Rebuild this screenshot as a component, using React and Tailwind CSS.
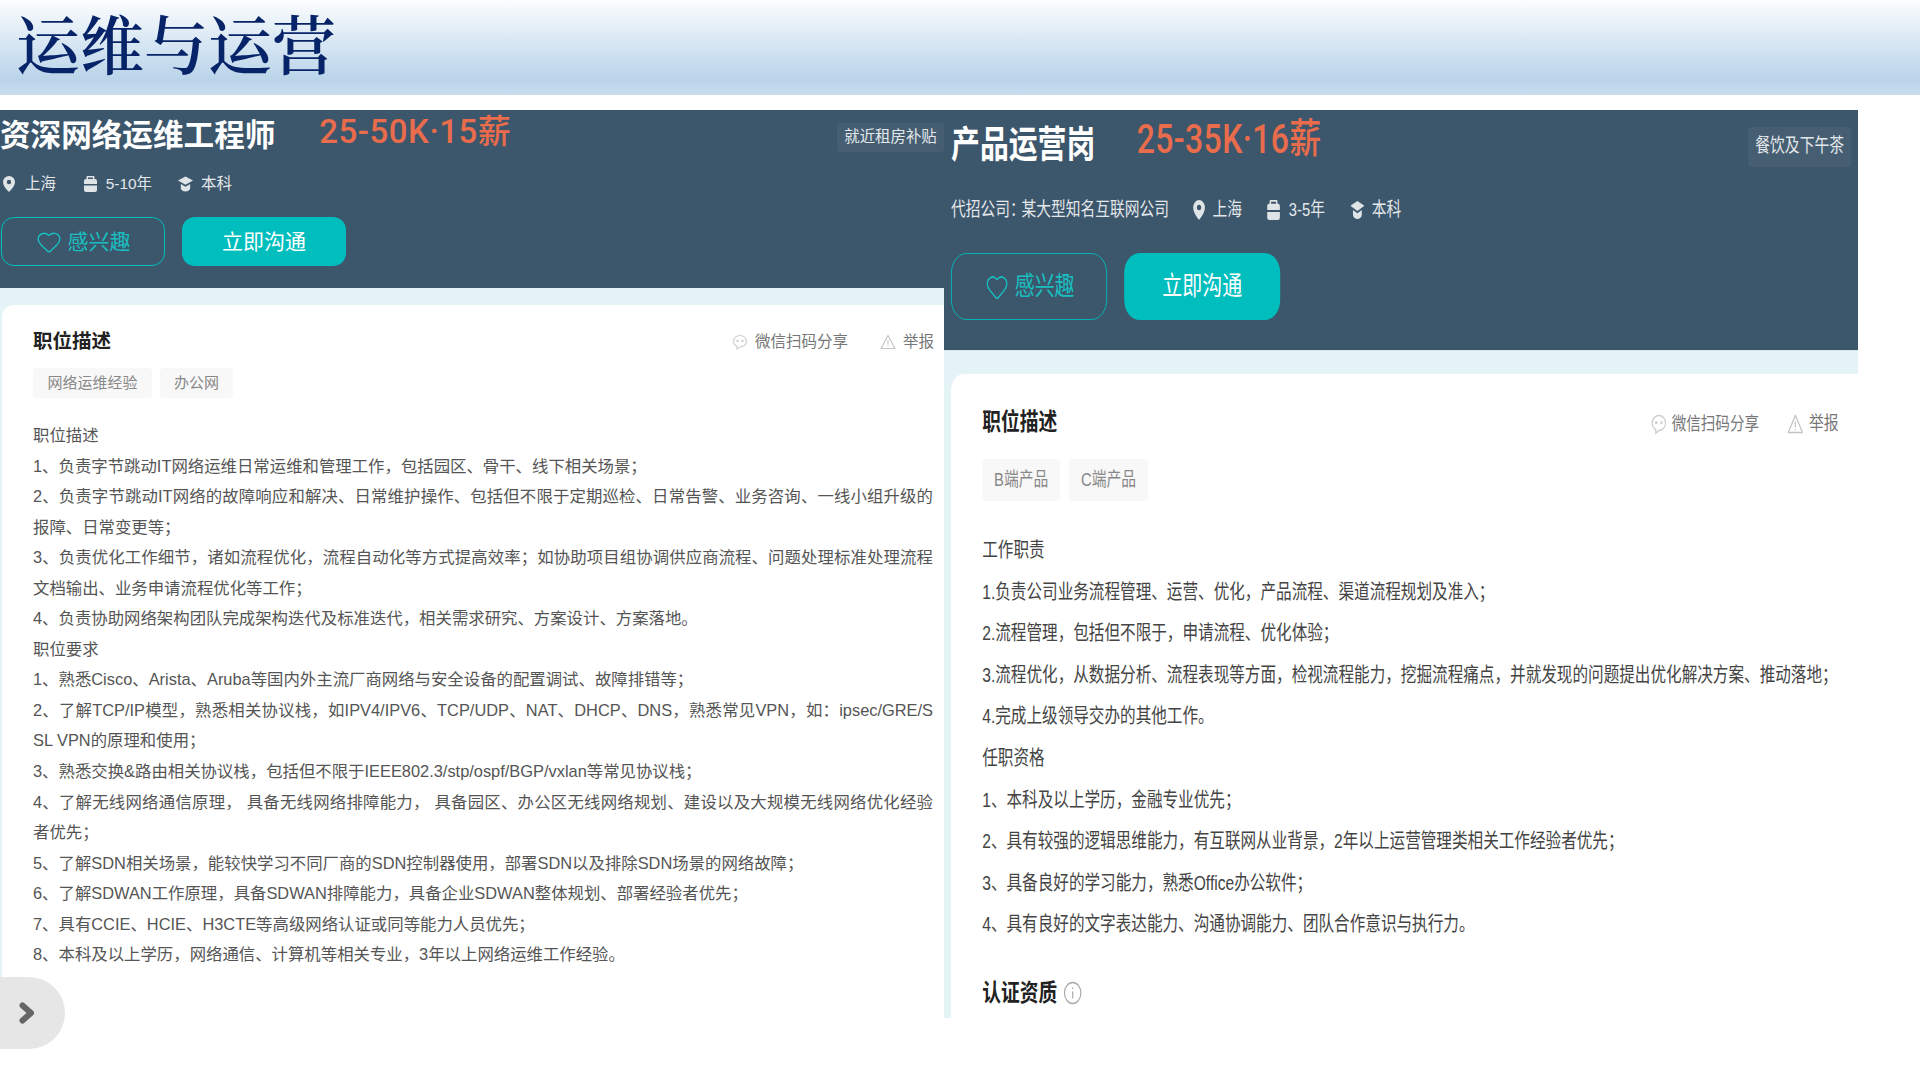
import React from 'react';
import { Heart } from 'lucide-react';

const leftLines = [
	'职位描述',
	'1、负责字节跳动IT网络运维日常运维和管理工作，包括园区、骨干、线下相关场景；',
	'2、负责字节跳动IT网络的故障响应和解决、日常维护操作、包括但不限于定期巡检、日常告警、业务咨询、一线小组升级的报障、日常变更等；',
	'3、负责优化工作细节，诸如流程优化，流程自动化等方式提高效率；如协助项目组协调供应商流程、问题处理标准处理流程文档输出、业务申请流程优化等工作；',
	'4、负责协助网络架构团队完成架构迭代及标准迭代，相关需求研究、方案设计、方案落地。',
	'职位要求',
	'1、熟悉Cisco、Arista、Aruba等国内外主流厂商网络与安全设备的配置调试、故障排错等；',
	'2、了解TCP/IP模型，熟悉相关协议栈，如IPV4/IPV6、TCP/UDP、NAT、DHCP、DNS，熟悉常见VPN，如：ipsec/GRE/SSL VPN的原理和使用；',
	'3、熟悉交换&路由相关协议栈，包括但不限于IEEE802.3/stp/ospf/BGP/vxlan等常见协议栈；',
	'4、了解无线网络通信原理， 具备无线网络排障能力， 具备园区、办公区无线网络规划、建设以及大规模无线网络优化经验者优先；',
	'5、了解SDN相关场景，能较快学习不同厂商的SDN控制器使用，部署SDN以及排除SDN场景的网络故障；',
	'6、了解SDWAN工作原理，具备SDWAN排障能力，具备企业SDWAN整体规划、部署经验者优先；',
	'7、具有CCIE、HCIE、H3CTE等高级网络认证或同等能力人员优先；',
	'8、本科及以上学历，网络通信、计算机等相关专业，3年以上网络运维工作经验。',
];

const rightLines = [
	'工作职责',
	'1.负责公司业务流程管理、运营、优化，产品流程、渠道流程规划及准入；',
	'2.流程管理，包括但不限于，申请流程、优化体验；',
	'3.流程优化，从数据分析、流程表现等方面，检视流程能力，挖掘流程痛点，并就发现的问题提出优化解决方案、推动落地；',
	'4.完成上级领导交办的其他工作。',
	'任职资格',
	'1、本科及以上学历，金融专业优先；',
	'2、具有较强的逻辑思维能力，有互联网从业背景，2年以上运营管理类相关工作经验者优先；',
	'3、具备良好的学习能力，熟悉Office办公软件；',
	'4、具有良好的文字表达能力、沟通协调能力、团队合作意识与执行力。',
];

function PinIcon({ className }) {
	return (
		<svg viewBox="0 0 12 16" className={className} fill="currentColor">
			<path fillRule="evenodd" d="M6 0a6 6 0 0 1 6 6c0 3.600-3.600 7.800-6 10C3.600 13.800 0 9.600 0 6a6 6 0 0 1 6-6zm0 3.800a2.200 2.200 0 1 0 0 4.400 2.200 2.200 0 0 0 0-4.400z" />
		</svg>
	);
}

function BagIcon({ className }) {
	return (
		<svg viewBox="0 0 13 16" className={className} fill="currentColor">
			<path d="M3.500 0h6a1 1 0 0 1 1 1v2h.6A1.900 1.900 0 0 1 13 4.900V8H0V4.900A1.900 1.900 0 0 1 1.900 3h.6V1a1 1 0 0 1 1-1zm.5 1.400V3h5V1.400z" fillRule="evenodd" />
			<path d="M0 9.500h13V14a2 2 0 0 1-2 2H2a2 2 0 0 1-2-2z" />
		</svg>
	);
}

function CapIcon({ className }) {
	return (
		<svg viewBox="0 0 16 16" className={className} fill="currentColor">
			<path d="M8 0l8 4.300-8 4.500L0 4.300z" />
			<path d="M3 8l5 2.800L13 8v4.500c0 2-2.400 3.500-5 3.500s-5-1.500-5-3.500z" />
		</svg>
	);
}

function ChatIcon({ className }) {
	return (
		<svg viewBox="0 0 16 16" className={className} fill="none" stroke="currentColor" strokeWidth="1.200">
			<path d="M8 1.500c3.600 0 6.500 2.500 6.500 5.800S11.600 13 8 13l-3 2v-2.600C2.800 11.400 1.500 9.500 1.500 7.300 1.500 4 4.400 1.500 8 1.500z" />
			<circle cx="5.500" cy="7" r=".6" fill="currentColor" />
			<circle cx="10.500" cy="7" r=".6" fill="currentColor" />
		</svg>
	);
}

function WarnIcon({ className }) {
	return (
		<svg viewBox="0 0 16 16" className={className} fill="none" stroke="currentColor" strokeWidth="1.200">
			<path d="M8 1.500L15 14.500H1z" strokeLinejoin="round" />
			<path d="M8 6v4.500M8 11.800v1" />
		</svg>
	);
}

function Meta({ children, textClass }) {
	return <span className={textClass}>{children}</span>;
}

function LeftPanel() {
	return (
		<section className="w-[944px] shrink-0">
			<div className="h-[178px] bg-[#3c566b] pt-[11px]">
				<div className="flex h-[29px] items-center">
					<h2 className="text-[30.600px] leading-none font-bold text-white">资深网络运维工程师</h2>
					<span className="ml-[44px] -mt-[8px] font-['Roboto','Noto_Sans_CJK_SC',sans-serif] text-[33px] leading-none font-medium tracking-[0.500px] text-[#e96c4c]">25-50K·15薪</span>
					<span className="mt-[3px] ml-auto flex h-[29px] w-[107px] items-center justify-center rounded-[4px] bg-white/5 text-[15.400px] text-[#e4e8eb]">就近租房补贴</span>
				</div>
				<div className="mt-[24px] flex h-[20px] items-center pl-[3px] text-[15.400px] text-[#e4e8eb]">
					<PinIcon className="h-[16px] w-[12px] text-[#dfe4e7]" />
					<Meta textClass="ml-[10px]">上海</Meta>
					<BagIcon className="ml-[27px] h-[16px] w-[15px] text-[#dfe4e7]" />
					<Meta textClass="ml-[8px]">5-10年</Meta>
					<CapIcon className="ml-[26px] h-[16px] w-[15px] text-[#dfe4e7]" />
					<Meta textClass="ml-[8px]">本科</Meta>
				</div>
				<div className="mt-[23px] flex gap-[17px] pl-px">
					<button className="flex h-[49px] w-[164px] items-center justify-center gap-[6px] rounded-[13px] border border-[#00bebd] text-[21px] text-[#19bfc0]">
						<Heart className="h-[26px] w-[26px]" strokeWidth={1.300} />
						感兴趣
					</button>
					<button className="h-[49px] w-[164px] rounded-[13px] bg-[#00bebd] text-[21px] text-white">立即沟通</button>
				</div>
			</div>
			<div className="bg-[#e3f3f6] pt-[17px] pl-[2px]">
				<div className="h-[672px] rounded-tl-[12px] bg-white pt-[26px] pl-[31px]">
					<div className="flex h-[22px] items-center pr-[10px]">
						<h3 className="text-[19.500px] font-bold text-[#222]">职位描述</h3>
						<ChatIcon className="ml-auto h-[16px] w-[16px] text-[#cfcfcf]" />
						<span className="ml-[7px] text-[15.500px] text-[#777]">微信扫码分享</span>
						<WarnIcon className="ml-[32px] h-[16px] w-[16px] text-[#c4c4c4]" />
						<span className="ml-[7px] text-[15.500px] text-[#777]">举报</span>
					</div>
					<div className="mt-[15px] flex gap-[8px]">
						<span className="flex h-[30px] w-[119px] items-center justify-center rounded-[4px] bg-[#f8f8f8] text-[15px] text-[#888]">网络运维经验</span>
						<span className="flex h-[30px] w-[73px] items-center justify-center rounded-[4px] bg-[#f8f8f8] text-[15px] text-[#888]">办公网</span>
					</div>
					<div className="mt-[22px] w-[900px] text-justify text-[16.400px] leading-[30.550px] break-all text-[#555]">
						{leftLines.map((line) => (
							<p key={line}>{line}</p>
						))}
					</div>
				</div>
			</div>
		</section>
	);
}

// this half of the picture is squeezed sideways, so it is laid out wider and scaled back
function RightPanel() {
	return (
		<section className="h-[908px] w-[914px] shrink-0 overflow-hidden">
			<div className="w-[1172px] origin-top-left scale-x-[0.78]">
				<div className="h-[240px] bg-[#3c566b] pt-[10px] pr-[9px] pl-[9px]">
					<div className="flex h-[46px] items-center">
						<h2 className="mt-[4px] text-[37px] leading-none font-bold text-white">产品运营岗</h2>
						<span className="-mt-[8px] ml-[53px] font-['Roboto','Noto_Sans_CJK_SC',sans-serif] text-[41px] leading-none font-medium tracking-[0.500px] text-[#e96c4c]">25-35K·16薪</span>
						<span className="mt-[7px] ml-auto flex h-[40px] w-[132px] items-center justify-center rounded-[4px] bg-white/5 text-[19px] text-[#e4e8eb]">餐饮及下午茶</span>
					</div>
					<div className="mt-[32px] flex h-[24px] items-center text-[18.900px] text-[#e4e8eb]">
						<span>代招公司：</span>
						<span className="-ml-[4px]">某大型知名互联网公司</span>
						<PinIcon className="ml-[31px] h-[20px] w-[16px] text-[#dfe4e7]" />
						<Meta textClass="ml-[9px]">上海</Meta>
						<BagIcon className="ml-[31px] h-[20px] w-[19px] text-[#dfe4e7]" />
						<Meta textClass="ml-[10px]">3-5年</Meta>
						<CapIcon className="ml-[33px] h-[20px] w-[18px] text-[#dfe4e7]" />
						<Meta textClass="ml-[9px]">本科</Meta>
					</div>
					<div className="mt-[31px] flex gap-[22px]">
						<button className="flex h-[67px] w-[200px] items-center justify-center gap-[6px] rounded-[20px] border border-[#00bebd] text-[25.600px] text-[#19bfc0]">
							<Heart className="h-[30px] w-[34px]" strokeWidth={1.300} />
							感兴趣
						</button>
						<button className="h-[67px] w-[200px] rounded-[20px] bg-[#00bebd] text-[25.600px] text-white">立即沟通</button>
					</div>
				</div>
				<div className="border-t border-[#d7e6ea] bg-[#e3f3f6] pt-[23px] pl-[9px]">
					<div className="rounded-tl-[16px] bg-white pt-[34px] pr-[25px] pl-[40px]">
						<div className="flex h-[28px] items-center">
							<h3 className="text-[24px] font-bold text-[#222]">职位描述</h3>
							<ChatIcon className="mt-[4px] ml-auto h-[22px] w-[21px] text-[#cfcfcf]" />
							<span className="mt-[4px] ml-[6px] text-[18.700px] text-[#777]">微信扫码分享</span>
							<WarnIcon className="mt-[4px] ml-[36px] h-[22px] w-[21px] text-[#c4c4c4]" />
							<span className="mt-[4px] ml-[7px] text-[19px] text-[#777]">举报</span>
						</div>
						<div className="mt-[23px] flex gap-[11px]">
							<span className="flex h-[42px] w-[100px] items-center justify-center rounded-[5px] bg-[#f8f8f8] text-[19px] text-[#888]">B端产品</span>
							<span className="flex h-[42px] w-[102px] items-center justify-center rounded-[5px] bg-[#f8f8f8] text-[19px] text-[#888]">C端产品</span>
						</div>
						<div className="mt-[29px] text-[20px] leading-[41.600px] text-[#444]">
							{rightLines.map((line) => (
								<p key={line} className="whitespace-pre">{line}</p>
							))}
						</div>
						<div className="mt-[33px] flex h-[28px] items-center gap-[8px]">
							<h3 className="text-[24px] font-bold text-[#222]">认证资质</h3>
							<svg viewBox="0 0 24 24" className="h-[24px] w-[24px] text-[#aaa]" fill="none" stroke="currentColor" strokeWidth="1.500">
								<circle cx="12" cy="12" r="10.500" />
								<path d="M12 10.500v7M12 6.500v1.500" />
							</svg>
						</div>
						<div className="h-[12px]" />
					</div>
				</div>
			</div>
		</section>
	);
}

export default function App() {
	return (
		<div className="relative h-[1078px] w-[1920px] overflow-hidden bg-white font-['Liberation_Sans','Noto_Sans_CJK_SC',sans-serif]">
			<header className="flex h-[95px] items-center bg-gradient-to-b from-[#fbfdfe] via-[#b9d3e9] via-85% to-[#c9deef] pl-[16px]">
				<h1 className="-mt-[14px] font-['Noto_Serif_CJK_SC','Noto_Sans_CJK_SC',serif] text-[64px] leading-none font-semibold text-[#082468]">运维与运营</h1>
			</header>
			<main className="mt-[15px] flex">
				<LeftPanel />
				<RightPanel />
			</main>
			<button className="absolute top-[977px] left-0 flex h-[72px] w-[65px] items-center justify-start rounded-r-[36px] bg-[#e6e6e6] pl-[19px]">
				<svg viewBox="0 0 16 22" className="h-[22px] w-[16px]" fill="none" stroke="#666" strokeWidth="6" strokeLinecap="round" strokeLinejoin="round">
					<path d="M3.500 3.500L12 11l-8.500 7.500" />
				</svg>
			</button>
		</div>
	);
}
